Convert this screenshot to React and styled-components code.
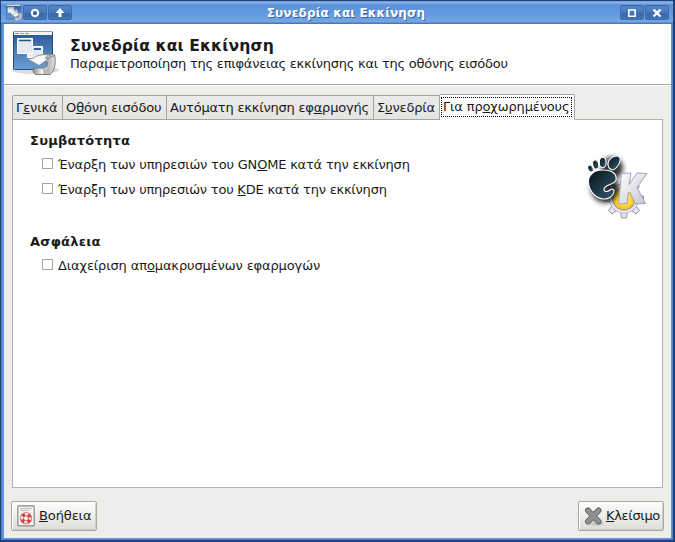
import React from "react";
import styled, { createGlobalStyle } from "styled-components";

const Global = createGlobalStyle`
  *, *::before, *::after { box-sizing: border-box; }
  html, body { margin: 0; padding: 0; overflow: hidden; }
  body { font: 13px/16px "DejaVu Sans", sans-serif; color: #1a1a1a; }
  svg { display: block; flex: none; }
`;

const Window = styled.div`
  width: 675px;
  height: 542px;
  display: flex;
  flex-direction: column;
  background: #6096de;
  border: solid #1f4379;
  border-width: 1px 2px 2px 1px;
  padding: 0 2px 2px 3px;
  box-shadow: inset 1px 0 0 #4a7cc4, inset -1px -1px 0 #4f83cf;
`;

const TitleBar = styled.header`
  height: 23px;
  flex: none;
  margin: 0 -2px 0 -3px;
  padding: 3px 3px 0 5px;
  display: flex;
  align-items: flex-start;
  background: linear-gradient(#5d88c4 0, #8db7ef 1px, #7fabe8 2px, #5b92da 4px, #6299df 13px, #76a6e5 21px, #4a78b8 22px);
`;

const TitleText = styled.div`
  flex: 1;
  text-align: center;
  font-weight: bold;
  font-size: 12px;
  line-height: 18px;
  letter-spacing: ${(p) => p.$track}px;
  color: #fff;
  text-shadow: 1px 1px 0 #39649f;
  padding-right: 1px;
`;

const TitleButton = styled.div`
  width: 24px;
  height: 15px;
  margin: 1px 1px 0 0;
  display: flex;
  align-items: center;
  justify-content: center;
  border: 1px solid #3a68a8;
  border-radius: 2px;
  background: linear-gradient(#5485c8, #4577b9 50%, #3767a8 51%, #3e70b3);
  box-shadow: inset 0 0 0 1px #5a8acb55;
`;

const Client = styled.main`
  flex: 1;
  display: flex;
  flex-direction: column;
  background: #ededeb;
`;

const Header = styled.section`
  height: 61px;
  display: flex;
  background: #fff;
  border-bottom: 1px solid #aca9a1;
  box-shadow: 0 1px 0 #fff;
  padding: 5px 0 0 7px;
`;

const HeaderText = styled.div`
  padding: 7px 0 0 11px;
`;

const Heading = styled.h1`
  margin: 0;
  font-size: 15.6px;
  line-height: 20px;
  letter-spacing: ${(p) => p.$track || 0}px;
  white-space: nowrap;
`;

const Label = styled.span`
  display: block;
  white-space: nowrap;
  letter-spacing: ${(p) => p.$track || 0}px;
`;

const Key = styled.u`
  text-decoration: underline;
  text-decoration-thickness: 1px;
  text-underline-offset: 1px;
  text-decoration-skip-ink: none;
`;

const Tabs = styled.nav`
  display: flex;
  align-items: flex-end;
  height: 26px;
  margin: 9px 0 -1px 8px;
  z-index: 1;
`;

const Tab = styled.div`
  width: ${(p) => p.$w}px;
  height: ${(p) => (p.$active ? 26 : 25)}px;
  padding: ${(p) => (p.$active ? "2px 2px 2px 1px" : "0 0 0 3px")};
  line-height: 24px;
  border: 1px solid #a3a3a0;
  border-left-width: ${(p) => (p.$first ? 1 : 0)}px;
  border-radius: ${(p) => (p.$active ? "0 2px 0 0" : p.$first ? "2px 0 0 0" : 0)};
  background: ${(p) => (p.$active ? "#fff" : "linear-gradient(#ebebe9, #e4e4e2)")};
  border-bottom-color: ${(p) => (p.$active ? "#fff" : "#a3a3a0")};
`;

const FocusRing = styled.div`
  height: 20px;
  border: 1px dotted #000;
  line-height: 18px;
  padding-left: 1px;
`;

const Panel = styled.section`
  height: 369px;
  width: 651px;
  margin-left: 8px;
  border: 1px solid #b2b2af;
  background: #fff;
  display: flex;
  justify-content: space-between;
  padding: 13px 14px 0 17px;
`;

const Group = styled.div`
  height: 101px;
`;

const GroupTitle = styled.h2`
  margin: 0 0 8px;
  font-size: 13px;
  line-height: 16px;
  letter-spacing: 0.25px;
`;

const CheckRow = styled.div`
  display: flex;
  height: 25px;
  padding-left: 12px;
`;

const CheckBox = styled.span`
  width: 11px;
  height: 11px;
  margin: 1px 5px 0 0;
  border: 1px solid #a9a9a2;
  background: #fff;
`;

const Emblem = styled.div`
  padding-top: 20px;
`;

const Footer = styled.footer`
  display: flex;
  justify-content: space-between;
  padding: 13px 7px 0 7px;
`;

const Button = styled.div`
  width: 86px;
  height: 30px;
  display: flex;
  align-items: center;
  border: 1px solid #a9a9a3;
  border-radius: 2px;
  background: linear-gradient(#fcfcfb, #eeeeec 50%, #dcddd8);
  box-shadow: inset 1px 1px 0 #fff, inset -1px -1px 0 #d0d0ca;
  padding-left: ${(p) => p.$pad}px;
  gap: ${(p) => p.$gap}px;
`;

function SessionIcon({ size, id, box = "0 0 48 48" }) {
  return (
    <svg width={size} height={size} viewBox={box}>
      <defs>
        <linearGradient id={id + "b"} x1="0" y1="0" x2="0" y2="1">
          <stop offset="0" stopColor="#285696" />
          <stop offset="1" stopColor="#6aa0d6" />
        </linearGradient>
        <linearGradient id={id + "s"} x1="0" y1="0" x2="1" y2="0">
          <stop offset="0" stopColor="#8a8a8a" />
          <stop offset=".4" stopColor="#f2f2f2" />
          <stop offset=".65" stopColor="#b5b5b5" />
          <stop offset="1" stopColor="#e0e0e0" />
        </linearGradient>
      </defs>
      <ellipse cx="24" cy="41" rx="24" ry="4" fill="#000" opacity=".14" />
      <rect x="2.500" y="2.500" width="39" height="38" rx="1" fill={`url(#${id}b)`} stroke="#234b82" />
      <path d="M3 2.500h38v3.500H3z" fill="#f4f4f4" />
      <path d="M4 4.500h4m1 0h4m1 0h4" stroke="#999" />
      <path d="M16.500 17.500h15v11h-15z" fill="#e6eaf1" stroke="#fff" />
      <path d="M23 19h7v2h-7z" fill="#315c99" />
      <path d="M6.500 9.500h15v15h-15z" fill="#e5e8ef" stroke="#fff" />
      <path d="M8 11.500h12" stroke="#28528d" strokeWidth="1.500" />
      <path d="M29 27c5-2 12-3 14.500-1 1.500 5 1 16-4.500 19.500H24.500c-2-1-3-4-2-6.500H31c5 0 7-4 4-8z" fill={`url(#${id}s)`} stroke="#6f6f6f" strokeWidth=".9" />
      <path d="M31 39c3 1 3 4 2 6.500M35 31c4-3 6-4 8-4" fill="none" stroke="#858585" strokeWidth="1" />
      <path d="M17 30l6-1c0-2 8-4 18-3.500-5 1-7 2-6.500 4H38l-10 7z" fill="#f7f7f5" stroke="#8b8b87" strokeWidth=".9" />
    </svg>
  );
}

function DesktopsEmblem() {
  const teeth = [0, 45, 90, 135, 180, 225, 270, 315];
  return (
    <svg width="64" height="68" viewBox="584 153 64 68">
      <defs>
        <linearGradient id="foot" x1="0" y1="0" x2="1" y2="1">
          <stop offset="0" stopColor="#0b1114" />
          <stop offset="1" stopColor="#315d73" />
        </linearGradient>
        <radialGradient id="sun">
          <stop offset="0" stopColor="#fff8b5" />
          <stop offset=".5" stopColor="#ffda3e" />
          <stop offset="1" stopColor="#f1b31c" />
        </radialGradient>
        <linearGradient id="kay" x1="0" y1="0" x2="1" y2="1">
          <stop offset="0" stopColor="#fff" />
          <stop offset="1" stopColor="#c5c6d5" />
        </linearGradient>
        <filter id="soft" x="-40%" y="-40%" width="180%" height="180%">
          <feGaussianBlur stdDeviation="2.800" />
        </filter>
      </defs>
      <g fill="#e4e4ec" stroke="#8d8d9c" strokeWidth=".9">
        {teeth.map((a) => (
          <path key={a} d="M620.500 186l1-7h5l1 7z" transform={`rotate(${a} 624 198.500)`} />
        ))}
      </g>
      <circle cx="624" cy="198.500" r="13" fill="url(#sun)" stroke="#9696a6" strokeWidth="4" />
      <circle cx="624" cy="198.500" r="13.200" fill="none" stroke="#e6e6ef" strokeWidth="2.600" />
      <g fill="#000" opacity=".8" filter="url(#soft)">
        <ellipse cx="605" cy="188" rx="14" ry="15" />
        <ellipse cx="612" cy="168" rx="11" ry="11" />
      </g>
      <path d="M621.500 173.500l9.500-.5-2 11.500 8-11.500 10 .5-10 14 8.500 16-10 .5-6-12-1.500 2-.8 9.500-8.700.5z" fill="url(#kay)" stroke="#9a9bae" strokeWidth=".9" />
      <g fill="url(#foot)" stroke="#fff" strokeWidth="1.100">
        <path d="M588.500 183c-1-8 6-13.500 15-13 9 0 13.500 4 12.500 10-1 5-11 4-12 9-.5 3.500 4 3 6 1 2-1.800 4.500-1 4 2-1 5-6 7.500-11 7-8-1-13.500-8-14.500-16z" />
        <ellipse cx="590.500" cy="168.500" rx="2.600" ry="3.700" transform="rotate(-25 590.500 168.500)" />
        <ellipse cx="595.700" cy="164.500" rx="3" ry="4.700" transform="rotate(-12 595.700 164.500)" />
        <ellipse cx="602.700" cy="162.500" rx="3.400" ry="5.200" />
        <path d="M608 165.500c-1-5 4-9.500 8.500-9.500 6 0 4 7 0 11.500-3 4-7.500 2-8.500-2z" />
      </g>
    </svg>
  );
}

function HelpIcon() {
  return (
    <svg width="18" height="22" viewBox="0 0 18 22">
      <rect x=".8" y=".8" width="16.400" height="20" rx="1" fill="#f3f3f1" stroke="#888a85" strokeWidth="1.200" />
      <path d="M3 3.500h12M3 5.500h9" stroke="#bbb" />
      <circle cx="9" cy="13.200" r="4" fill="none" stroke="#c05050" strokeWidth="4" />
      <circle cx="9" cy="13.200" r="4" fill="none" stroke="#f4e6e4" strokeWidth="2.800" />
      <circle cx="9" cy="13.200" r="4" fill="none" stroke="#d93a3a" strokeWidth="3" strokeDasharray="3.140 3.140" strokeDashoffset="-1.570" />
    </svg>
  );
}

function CloseIcon() {
  return (
    <svg width="20" height="20" viewBox="0 0 20 20">
      <ellipse cx="12" cy="17.500" rx="8" ry="2" fill="#000" opacity=".12" />
      <path d="M4 4.500l10.500 11M14.500 4.500L4 15.500" stroke="#666865" strokeWidth="6" strokeLinecap="round" />
      <path d="M4 4.500l10.500 11M14.500 4.500L4 15.500" stroke="#8f918e" strokeWidth="4" strokeLinecap="round" />
    </svg>
  );
}

export default function App() {
  return (
    <>
      <Global />
      <Window>
        <TitleBar>
          <SessionIcon size={17} id="t" box="2 1 45 46" />
          <TitleButton><svg width="10" height="10"><circle cx="5" cy="5" r="3.200" fill="none" stroke="#fff" strokeWidth="2" /></svg></TitleButton>
          <TitleButton><svg width="10" height="10"><path d="M5 0L9.500 5H6.500v4h-3V5H.5z" fill="#fff" /></svg></TitleButton>
          <TitleText $track={0.16}>Συνεδρία και Εκκίνηση</TitleText>
          <TitleButton><svg width="8" height="8"><path d="M.8 1h6.400v6.200H.8z" fill="none" stroke="#fff" strokeWidth="1.600" /></svg></TitleButton>
          <TitleButton><svg width="10" height="10"><path d="M1.500 1.500l7 7M8.500 1.500l-7 7" stroke="#fff" strokeWidth="2.400" /></svg></TitleButton>
        </TitleBar>
        <Client>
          <Header>
            <SessionIcon size={48} id="h" />
            <HeaderText>
              <Heading $track={0.1}>Συνεδρία και Εκκίνηση</Heading>
              <Label $track={-0.225}>Παραμετροποίηση της επιφάνειας εκκίνησης και της οθόνης εισόδου</Label>
            </HeaderText>
          </Header>
          <Tabs>
            <Tab $w={51} $first><Label $track={-0.1}>Γ<Key>ε</Key>νικά</Label></Tab>
            <Tab $w={104}><Label $track={-0.1}>Ο<Key>θ</Key>όνη εισόδου</Label></Tab>
            <Tab $w={207}><Label $track={-0.2}>Αυτόματη εκκίνηση εφ<Key>α</Key>ρμογής</Label></Tab>
            <Tab $w={66}><Label $track={-0.15}>Σ<Key>υ</Key>νεδρία</Label></Tab>
            <Tab $w={135} $active><FocusRing><Label $track={-0.15}>Για πρ<Key>ο</Key>χωρημένους</Label></FocusRing></Tab>
          </Tabs>
          <Panel>
            <div>
              <Group>
                <GroupTitle>Συμβατότητα</GroupTitle>
                <CheckRow><CheckBox /><Label $track={-0.2}>Έναρξη των υπηρεσιών του GN<Key>O</Key>ME κατά την εκκίνηση</Label></CheckRow>
                <CheckRow><CheckBox /><Label $track={-0.215}>Έναρξη των υπηρεσιών του <Key>K</Key>DE κατά την εκκίνηση</Label></CheckRow>
              </Group>
              <Group>
                <GroupTitle>Ασφάλεια</GroupTitle>
                <CheckRow><CheckBox /><Label $track={-0.12}>Διαχείριση απ<Key>ο</Key>μακρυσμένων εφαρμογών</Label></CheckRow>
              </Group>
            </div>
            <Emblem><DesktopsEmblem /></Emblem>
          </Panel>
          <Footer>
            <Button $pad={5} $gap={4}><HelpIcon /><Label $track={-0.1}><Key>Β</Key>οήθεια</Label></Button>
            <Button $pad={5} $gap={2}><CloseIcon /><Label $track={-0.32}><Key>Κ</Key>λείσιμο</Label></Button>
          </Footer>
        </Client>
      </Window>
    </>
  );
}
